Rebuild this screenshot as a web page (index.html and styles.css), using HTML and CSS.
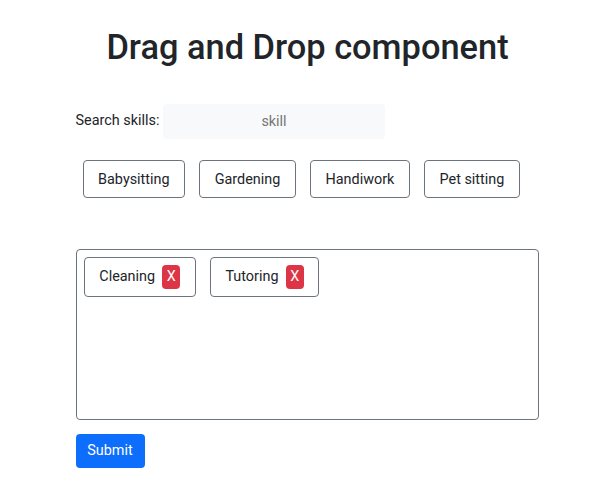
FILE: index.html
```html
<!DOCTYPE html>
<html lang="en">
<head>
<meta charset="utf-8">
<title>Drag and Drop component</title>
<link rel="stylesheet" href="styles.css">
</head>
<body>
<main class="container">
<h1 class="title">Drag and Drop component</h1>
<div class="search"><label class="search-label" for="skill">Search skills:</label><input id="skill" class="search-input" type="text" placeholder="skill"></div>
<div class="skills">
<div class="skill">Babysitting</div>
<div class="skill">Gardening</div>
<div class="skill">Handiwork</div>
<div class="skill">Pet sitting</div>
</div>
<div class="dropzone">
<div class="skill chosen">Cleaning<button class="remove" type="button">X</button></div>
<div class="skill chosen">Tutoring<button class="remove" type="button">X</button></div>
</div>
<button class="submit" type="button">Submit</button>
</main>
</body>
</html>
```
FILE: styles.css
```css
* { box-sizing: border-box; }
body { margin: 0; background: #fff; color: #212529; font: 400 14.4px/22px Roboto, sans-serif; }
button, input { font: inherit; }
.container { width: 463.5px; margin-left: 75.5px; padding-top: 25px; }
.title { margin: 0; padding-left: 0.5px; text-align: center; font-size: 34.4px; line-height: 44px; font-weight: 500; white-space: nowrap; }
.search { display: flex; align-items: center; gap: 3.6px; margin-top: 35px; height: 35px; }
.search-label { padding-bottom: 1px; }
.search-input { width: 222px; height: 35px; border: 0; border-radius: 4px; background: #f8f9fa; text-align: center; padding: 0; }
.search-input::placeholder { color: #757575; opacity: 1; }
.skills { display: flex; gap: 14.4px; margin: 21px 7.2px 0; }
.skill { height: 38px; padding: 8px 14.4px 6px; border: 1px solid #6c757d; border-radius: 4px; white-space: nowrap; }
.dropzone { display: flex; align-items: flex-start; gap: 14.4px; margin-top: 51px; height: 171px; padding: 7px 7.4px; border: 1px solid #6c757d; border-radius: 4px; }
.chosen { display: flex; gap: 7.2px; height: 40px; }
.remove { width: 18px; height: 24px; margin-top: -1px; padding: 0; border: 0; border-radius: 4px; background: #dc3545; color: #fff; }
.submit { display: block; width: 69px; height: 34px; margin-top: 14px; padding: 0; border: 0; border-radius: 4px; background: #0d6efd; color: #fff; }
```
